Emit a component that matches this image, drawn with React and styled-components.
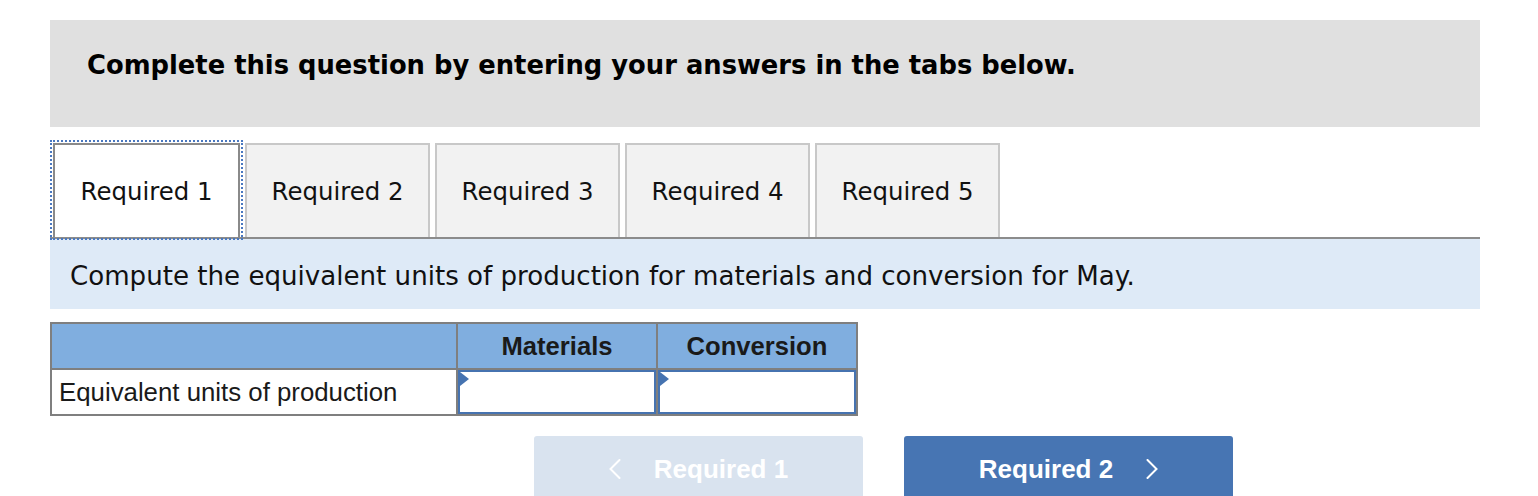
import React from 'react';
import styled, { createGlobalStyle } from 'styled-components';

const GlobalStyle = createGlobalStyle`
  body {
    margin: 0;
    background: #ffffff;
    font-family: "DejaVu Sans", Verdana, sans-serif;
  }
`;

const Page = styled.div`
  width: 1430px;
  padding: 20px 0 0 50px;
`;

const Banner = styled.div`
  height: 107px;
  background: #e0e0e0;
  display: flex;
  align-items: flex-start;
  padding: 30px 0 0 37px;
  box-sizing: border-box;
`;

const BannerTitle = styled.h1`
  margin: 0;
  font-family: "DejaVu Sans", Verdana, sans-serif;
  font-weight: 700;
  font-size: 25.8px;
  line-height: 1.2;
  color: #000;
`;

const TabList = styled.div`
  display: flex;
  gap: 5px;
  margin-top: 16px;
  padding-left: 3px;
`;

const Tab = styled.button`
  width: ${p => (p.active ? 187 : 185)}px;
  height: 94px;
  box-sizing: border-box;
  border: 2px solid ${p => (p.active ? '#8a8a8a' : '#c8c8c8')};
  border-bottom: none;
  background: ${p => (p.active ? '#ffffff' : '#f2f2f2')};
  outline: ${p => (p.active ? '2px dotted #4a78c0' : 'none')};
  outline-offset: 1px;
  font-family: "DejaVu Sans", Verdana, sans-serif;
  font-size: 24.4px;
  color: #111;
  padding: 0;
  cursor: pointer;
`;

const Panel = styled.div`
  border-top: 2px solid #8c8c8c;
  background: #deeaf7;
  height: 72px;
  box-sizing: border-box;
  padding: 22px 0 0 20px;
`;

const PanelText = styled.p`
  margin: 0;
  font-family: "DejaVu Sans", Verdana, sans-serif;
  font-size: 26.1px;
  line-height: 1.2;
  color: #111;
`;

const Table = styled.table`
  margin-top: 13px;
  border-collapse: collapse;
  font-family: "Liberation Sans", Arial, sans-serif;
`;

const HeadCell = styled.th`
  width: ${p => p.w}px;
  height: 44px;
  padding: 0;
  background: #80aedf;
  border: 2px solid #7f7f7f;
  font-size: 25.6px;
  font-weight: 700;
  color: #1a1a1a;
  text-align: center;
`;

const LabelCell = styled.td`
  height: 44px;
  padding: 0 0 0 7px;
  border: 2px solid #7f7f7f;
  font-size: 25.8px;
  color: #1a1a1a;
  text-align: left;
`;

const InputCell = styled.td`
  padding: 0;
  border: 2px solid #7f7f7f;
  position: relative;
`;

const Input = styled.input`
  display: block;
  width: 100%;
  height: 44px;
  box-sizing: border-box;
  border: 2px solid #4673b0;
  background: #fff;
  margin: 0;
  outline: none;
`;

const Marker = styled.span`
  position: absolute;
  top: 2px;
  left: 2px;
  width: 0;
  height: 0;
  border-top: 7px solid transparent;
  border-bottom: 7px solid transparent;
  border-left: 9px solid #4673b0;
`;

const NavRow = styled.div`
  display: flex;
  gap: 41px;
  margin: 20px 0 0 484px;
`;

const NavButton = styled.button`
  width: 329px;
  height: 62px;
  border: none;
  border-radius: 3px 3px 0 0;
  background: ${p => (p.disabled ? '#d9e3ef' : '#4775b3')};
  color: #ffffff;
  font-family: "Liberation Sans", Arial, sans-serif;
  font-weight: 700;
  font-size: 26px;
  display: flex;
  align-items: center;
  justify-content: center;
  gap: 33px;
  padding: 4px 0 0;
  cursor: ${p => (p.disabled ? 'default' : 'pointer')};
`;

const Chevron = ({ dir }) => (
  <svg width="12" height="20" viewBox="0 0 12 20" fill="none">
    <path
      d={dir === 'left' ? 'M10.5 1 L1.5 10 L10.5 19' : 'M1.5 1 L10.5 10 L1.5 19'}
      stroke="#ffffff"
      strokeWidth="2"
      strokeLinecap="round"
      strokeLinejoin="miter"
    />
  </svg>
);

const tabs = ['Required 1', 'Required 2', 'Required 3', 'Required 4', 'Required 5'];

export default function App() {
  return (
    <>
      <GlobalStyle />
      <Page>
        <Banner>
          <BannerTitle>Complete this question by entering your answers in the tabs below.</BannerTitle>
        </Banner>
        <TabList>
          {tabs.map((t, i) => (
            <Tab key={t} active={i === 0}>{t}</Tab>
          ))}
        </TabList>
        <Panel>
          <PanelText>Compute the equivalent units of production for materials and conversion for May.</PanelText>
        </Panel>
        <Table>
          <thead>
            <tr>
              <HeadCell w={404} />
              <HeadCell w={198}>Materials</HeadCell>
              <HeadCell w={198}>Conversion</HeadCell>
            </tr>
          </thead>
          <tbody>
            <tr>
              <LabelCell>Equivalent units of production</LabelCell>
              <InputCell><Input /><Marker /></InputCell>
              <InputCell><Input /><Marker /></InputCell>
            </tr>
          </tbody>
        </Table>
        <NavRow>
          <NavButton disabled>
            <Chevron dir="left" />
            <span>Required 1</span>
          </NavButton>
          <NavButton>
            <span>Required 2</span>
            <Chevron dir="right" />
          </NavButton>
        </NavRow>
      </Page>
    </>
  );
}
